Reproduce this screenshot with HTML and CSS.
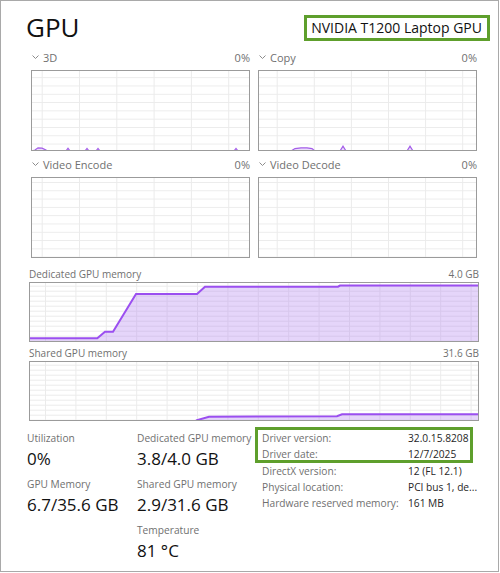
FILE: index.html
```html
<!DOCTYPE html>
<html lang="en">
<head>
  <meta charset="UTF-8" />
  <title>GPU</title>
  <link rel="stylesheet" href="styles.css">
</head>
<body>
<div class="frame">
  <header class="head">
    <h1 class="title">GPU</h1>
    <div class="adapter">NVIDIA T1200 Laptop GPU</div>
  </header>

  <section class="engines">
    <div class="engine">
      <div class="engine-head">
        <span class="engine-name"><svg class="chev" width="7" height="5"><polyline points="0.5,0.5 3.5,3.5 6.5,0.5" /></svg>3D</span>
        <span>0%</span>
      </div>
      <div class="graph">
        <svg width="217" height="79">
          <defs><pattern id="g1" width="37.3" height="8.3" x="9.7" y="6.2" patternUnits="userSpaceOnUse"><path d="M0.5 0V8.3M0 0.5H37.3" /></pattern></defs>
          <rect width="217" height="79" fill="url(#g1)" />
          <polyline class="spike" points="0,80 3,79 6,76.8 10,77.2 14,79 15,80 34,80 36,77.2 38,80 53,80 55,77.4 57,80 64,80 66,77.4 68,80 202,80 204,77.4 206,80 217,80" />
        </svg>
      </div>
    </div>
    <div class="engine">
      <div class="engine-head">
        <span class="engine-name"><svg class="chev" width="7" height="5"><polyline points="0.5,0.5 3.5,3.5 6.5,0.5" /></svg>Copy</span>
        <span>0%</span>
      </div>
      <div class="graph">
        <svg width="217" height="79">
          <defs><pattern id="g2" width="37.1" height="8.3" x="17.7" y="6.2" patternUnits="userSpaceOnUse"><path d="M0.5 0V8.3M0 0.5H37.1" /></pattern></defs>
          <rect width="217" height="79" fill="url(#g2)" />
          <polyline class="spike" points="0,80 32,80 36,77.6 42,76.8 48,76.8 53,77.6 56,80 81,80 84,75.2 87,80 148,80 151,75.2 154,80 217,80" />
        </svg>
      </div>
    </div>
    <div class="engine">
      <div class="engine-head">
        <span class="engine-name"><svg class="chev" width="7" height="5"><polyline points="0.5,0.5 3.5,3.5 6.5,0.5" /></svg>Video Encode</span>
        <span>0%</span>
      </div>
      <div class="graph">
        <svg width="217" height="79">
          <defs><pattern id="g3" width="37.3" height="8.3" x="9.7" y="4" patternUnits="userSpaceOnUse"><path d="M0.5 0V8.3M0 0.5H37.3" /></pattern></defs>
          <rect width="217" height="79" fill="url(#g3)" />
        </svg>
      </div>
    </div>
    <div class="engine">
      <div class="engine-head">
        <span class="engine-name"><svg class="chev" width="7" height="5"><polyline points="0.5,0.5 3.5,3.5 6.5,0.5" /></svg>Video Decode</span>
        <span>0%</span>
      </div>
      <div class="graph">
        <svg width="217" height="79">
          <defs><pattern id="g4" width="37.1" height="8.3" x="17.7" y="4" patternUnits="userSpaceOnUse"><path d="M0.5 0V8.3M0 0.5H37.1" /></pattern></defs>
          <rect width="217" height="79" fill="url(#g4)" />
        </svg>
      </div>
    </div>
  </section>

  <section class="memory">
    <div class="mem-head"><span>Dedicated GPU memory</span><span>4.0 GB</span></div>
    <div class="graph">
      <svg width="448" height="58">
        <defs><pattern id="g5" width="30.4" height="5" x="15" y="2.7" patternUnits="userSpaceOnUse"><path d="M0.5 0V5M0 0.5H30.4" /></pattern></defs>
        <rect width="448" height="58" fill="url(#g5)" />
        <polygon class="area" points="0,55.3 67.3,55.3 75,48.7 83,48.7 106,11 167,11 175,3.7 308,3.7 310,2.6 448,2.6 448,58 0,58" />
        <polyline class="line" points="0,55.3 67.3,55.3 75,48.7 83,48.7 106,11 167,11 175,3.7 308,3.7 310,2.6 448,2.6" />
      </svg>
    </div>

    <div class="mem-head shared"><span>Shared GPU memory</span><span>31.6 GB</span></div>
    <div class="graph">
      <svg width="448" height="58">
        <defs><pattern id="g6" width="30.4" height="5" x="15" y="2.7" patternUnits="userSpaceOnUse"><path d="M0.5 0V5M0 0.5H30.4" /></pattern></defs>
        <rect width="448" height="58" fill="url(#g6)" />
        <polygon class="area" points="168,58 179,54.7 307,54.2 312,52.2 448,52.2 448,58" />
        <polyline class="line" points="166,58.5 179,54.7 307,54.2 312,52.2 448,52.2" />
      </svg>
    </div>
  </section>

  <section class="stats">
    <div class="stat">
      <div class="stat-label">Utilization</div>
      <div class="stat-value">0%</div>
    </div>
    <div class="stat">
      <div class="stat-label">Dedicated GPU memory</div>
      <div class="stat-value">3.8/4.0 GB</div>
    </div>
    <div class="stat">
      <div class="stat-label">GPU Memory</div>
      <div class="stat-value">6.7/35.6 GB</div>
    </div>
    <div class="stat">
      <div class="stat-label">Shared GPU memory</div>
      <div class="stat-value">2.9/31.6 GB</div>
    </div>
    <div class="stat temp">
      <div class="stat-label">Temperature</div>
      <div class="stat-value">81 °C</div>
    </div>

    <div class="props">
      <div class="driver">
        <div class="prop"><span class="prop-key">Driver version:</span><span>32.0.15.8208</span></div>
        <div class="prop"><span class="prop-key">Driver date:</span><span>12/7/2025</span></div>
      </div>
      <div class="prop"><span class="prop-key">DirectX version:</span><span>12 (FL 12.1)</span></div>
      <div class="prop"><span class="prop-key">Physical location:</span><span>PCI bus 1, de...</span></div>
      <div class="prop"><span class="prop-key">Hardware reserved memory:</span><span>161 MB</span></div>
    </div>
  </section>
</div>
</body>
</html>
```

FILE: styles.css
```css
body {
  margin: 0;
  background-color: #ffffff;
  font-family: "Open Sans", "Noto Sans", sans-serif;
  color: #1a1a1a;
}
.frame {
  box-sizing: border-box;
  width: 499px;
  height: 572px;
  border: 1px solid #a9a9a9;
}
.head {
  display: flex;
  justify-content: space-between;
  align-items: flex-start;
  padding: 11px 8px 0 25px;
}
.title {
  margin: 0;
  font-size: 26px;
  font-weight: normal;
  line-height: 30px;
  color: #111;
}
.adapter {
  margin-top: 3px;
  border: 3px solid #5e9f2c;
  padding: 0 5px 0 4px;
  font-size: 14px;
  line-height: 20px;
  color: #111;
}
.engines {
  display: grid;
  grid-template-columns: 219px 219px;
  column-gap: 8px;
  row-gap: 5px;
  margin-top: 7px;
  padding-left: 30px;
}
.engine-head, .mem-head {
  display: flex;
  justify-content: space-between;
  align-items: center;
  height: 16px;
  font-size: 11px;
  color: #707070;
  white-space: nowrap;
}
.mem-head {
  font-size: 10px;
}
.engine-head {
  margin-bottom: 5px;
}
.engine-name {
  display: flex;
  align-items: center;
}
.chev {
  margin: 1px 4px 0 1px;
}
.chev polyline {
  fill: none;
  stroke: #8c8c8c;
  stroke-width: 1;
}
.graph {
  border: 1px solid #9b9b9b;
  line-height: 0;
}
.graph svg {
  display: block;
}
.graph pattern path {
  stroke: #ebebeb;
  stroke-width: 1;
  fill: none;
}
.spike {
  fill: #ecdffb;
  stroke: #a45ee9;
  stroke-width: 1.2;
}
.area {
  fill: rgba(175, 125, 240, 0.32);
}
.line {
  fill: none;
  stroke: #9b4ff0;
  stroke-width: 2;
}
.memory {
  width: 450px;
  margin-top: 8px;
  padding-left: 28px;
}
.mem-head.shared {
  margin-top: 3px;
}
.stats {
  display: grid;
  grid-template-columns: 110px 118px 218px;
  grid-template-rows: auto auto auto;
  margin-top: 6px;
  padding-left: 26px;
  white-space: nowrap;
}
.stat {
  padding-top: 3px;
}
.stat:nth-child(n+3) {
  padding-top: 0;
}
.temp {
  grid-column: 2;
}
.stat-label {
  font-size: 10.2px;
  line-height: 16px;
  color: #707070;
}
.stat-value {
  font-size: 17px;
  line-height: 26px;
  margin-bottom: 4px;
  color: #111;
}
.props {
  grid-column: 3;
  grid-row: 1 / span 3;
  font-size: 10.2px;
  color: #6f6f6f;
}
.driver {
  height: 30px;
  border: 3px solid #5e9f2c;
}
.prop {
  display: grid;
  grid-template-columns: 146px auto;
  line-height: 16px;
  padding-left: 4px;
}
.props > .prop {
  padding-left: 7px;
}
.prop span:last-child {
  color: #262626;
}
```
